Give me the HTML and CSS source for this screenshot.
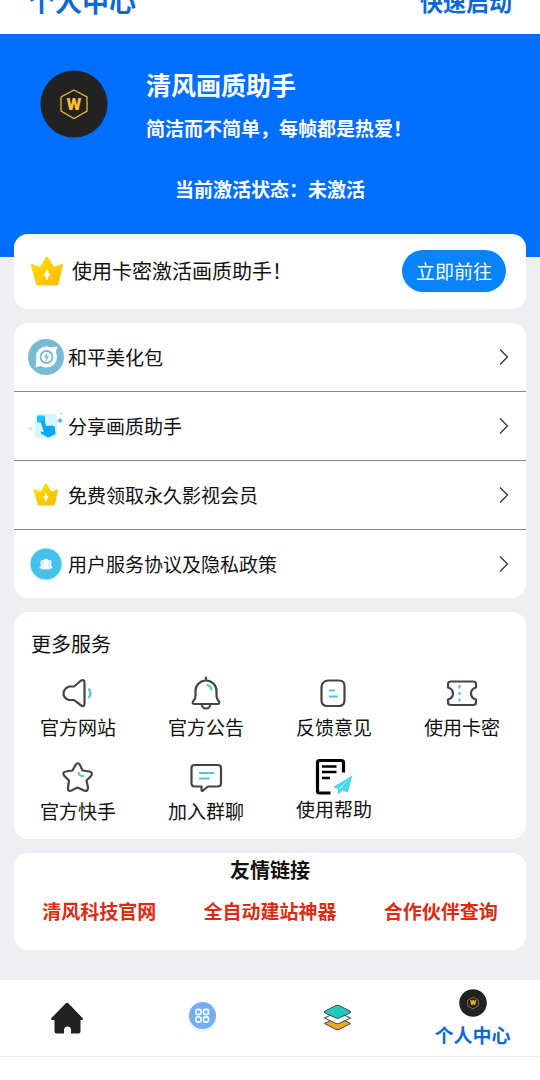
FILE: index.html
```html
<!DOCTYPE html>
<html lang="zh-CN">
<head>
<meta charset="utf-8">
<meta name="viewport" content="width=device-width, initial-scale=1">
<title>个人中心</title>
<link rel="stylesheet" href="styles.css">
</head>
<body>
<svg class="defs" aria-hidden="true">
  <defs>
    <linearGradient id="gold" x1="0" y1="0" x2="1" y2="1">
      <stop offset="0" stop-color="#ffe500"/>
      <stop offset="1" stop-color="#fbb60e"/>
    </linearGradient>
    <symbol id="crown" viewBox="0 0 34 30">
      <path d="M2 8 10 11 16 1Q17 0 18 1L24 11 32 8Q33 8 33 9L28.500 28Q28 29.500 26.500 29.500H8Q6.500 29.500 6 28L1 10Q1 7 2 8Z" fill="url(#gold)"/>
      <path d="M17 13.500Q18 17 20 18.500Q18 20 17 24Q16 20 14 18.500Q16 17 17 13.500Z" fill="#fff" stroke="#fff" stroke-width=".6"/>
    </symbol>
    <symbol id="logo" viewBox="0 0 68 68">
      <circle cx="34" cy="34" r="33.500" fill="#222"/>
      <path d="M34 20 47 27V41L34 48.500 21 41V27Z" fill="none" stroke="#e6b43c" stroke-width="1.300"/>
      <text x="34" y="40" text-anchor="middle" class="logo-letter">W</text>
    </symbol>
    <symbol id="chevron" viewBox="0 0 10 16">
      <path d="M1 .5 8.500 8 1 15.500" fill="none" stroke="#333" stroke-width="1.300"/>
    </symbol>
  </defs>
</svg>

<header class="topbar">
  <h1 class="topbar-title">个人中心</h1>
  <a class="topbar-link" href="#launch">快速启动</a>
</header>

<main class="page">
  <section class="hero">
    <div class="profile">
      <svg class="avatar"><use href="#logo"/></svg>
      <div class="profile-text">
        <h2 class="profile-name">清风画质助手</h2>
        <p class="profile-motto">简洁而不简单，每帧都是热爱！</p>
      </div>
    </div>
    <p class="status">当前激活状态：未激活</p>
  </section>

  <div class="cards">
    <section class="card activate">
      <svg class="activate-icon"><use href="#crown"/></svg>
      <p class="activate-text">使用卡密激活画质助手！</p>
      <button class="activate-button" type="button">立即前往</button>
    </section>

    <nav class="card menu">
      <a class="menu-row" href="#beauty">
        <svg class="menu-icon" viewBox="0 0 36 36">
          <circle cx="18" cy="18" r="18" fill="#79bad4"/>
          <circle cx="18.500" cy="18" r="10.500" fill="#fff"/>
          <path d="M23 8.500 29.500 7.500 27.500 14ZM8.500 20 7.500 28.500 14 26.500Z" fill="#fff"/>
          <circle cx="18.500" cy="18" r="6" fill="none" stroke="#79bad4" stroke-width="1.800"/>
          <path d="M19 14 16.500 18.500H18.500L18 22 20.500 17.500H18.800Z" fill="#79bad4" stroke="#79bad4" stroke-width=".6"/>
        </svg>
        <span class="menu-label">和平美化包</span>
        <svg class="chevron"><use href="#chevron"/></svg>
      </a>
      <a class="menu-row" href="#share">
        <svg class="menu-icon" viewBox="0 0 36 36">
          <rect x="7" y="6" width="22" height="24" rx="3" fill="#d5f5ff"/>
          <rect x="9" y="7.500" width="8" height="7" rx="1" fill="#1cc0fb"/>
          <path d="M12.500 13 16.500 12 18 18 25 17.500Q27 18 27 20L27.500 26 20 29.500 13 25.500 12.500 23 16 24.500Z" fill="#0ba5f5"/>
          <circle cx="2.500" cy="20.500" r="2" fill="#c2eff9"/>
          <circle cx="33.500" cy="5.500" r="1.500" fill="#c2eff9"/>
          <path d="M32 10 34.500 12.500 32 15 29.500 12.500Z" fill="#43b8c2"/>
        </svg>
        <span class="menu-label">分享画质助手</span>
        <svg class="chevron"><use href="#chevron"/></svg>
      </a>
      <a class="menu-row" href="#vip">
        <svg class="menu-icon" viewBox="0 0 36 36"><use href="#crown" x="5" y="6" width="26" height="23"/></svg>
        <span class="menu-label">免费领取永久影视会员</span>
        <svg class="chevron"><use href="#chevron"/></svg>
      </a>
      <a class="menu-row" href="#terms">
        <svg class="menu-icon" viewBox="0 0 36 36">
          <circle cx="18" cy="18" r="17" fill="#e2f6fd"/>
          <circle cx="18" cy="18" r="15.500" fill="#45c2ec"/>
          <g fill="#fff">
            <ellipse cx="14.500" cy="17" rx="2" ry="3"/><ellipse cx="21.500" cy="17" rx="2" ry="3"/>
            <path d="M11.500 22.500Q11.500 19.500 14 19H22Q24.500 19.500 24.500 22.500Z"/>
            <path d="M13.500 23.500Q14 20 16 19.500A3.200 4 0 1 1 20 19.500Q22 20 22.500 23.500Z" stroke="#45c2ec" stroke-width=".4"/>
          </g>
        </svg>
        <span class="menu-label">用户服务协议及隐私政策</span>
        <svg class="chevron"><use href="#chevron"/></svg>
      </a>
    </nav>

    <section class="card services">
      <h2 class="services-title">更多服务</h2>
      <div class="services-grid">
        <a class="service" href="#site">
          <svg class="service-icon" viewBox="0 0 40 40">
            <path class="ink" d="M11 13.500H16L22.500 8Q26.500 5.500 26.500 10V30Q26.500 35 22.500 32L16 27H11Q5.500 25 5.500 20.500T11 13.500Z"/>
            <path class="accent" d="M30.500 15.500Q34.500 20 30.500 25"/>
          </svg>
          <span>官方网站</span>
        </a>
        <a class="service" href="#notice">
          <svg class="service-icon" viewBox="0 0 40 40">
            <path class="ink" d="M20 4.500V7M9.500 18A10.500 10.500 0 0 1 30.500 18V23Q30.500 26 33 28.500 34 31 31.500 31H8.500Q6 31 7 28.500 9.500 26 9.500 23ZM15.500 31Q16 35.500 20 35.500T24.500 31"/>
            <path class="accent" d="M20.500 12Q25.500 12.500 25.500 17.500"/>
          </svg>
          <span>官方公告</span>
        </a>
        <a class="service" href="#feedback">
          <svg class="service-icon" viewBox="0 0 40 40">
            <path class="ink" d="M14 7.500H25Q30.500 7.500 30.500 13V27Q30.500 33 25 33H13Q7.500 33 7.500 27V14Q8 8 14 7.500Z"/>
            <path class="accent" d="M15 17.500H21M15 23.500H24"/>
          </svg>
          <span>反馈意见</span>
        </a>
        <a class="service" href="#card">
          <svg class="service-icon" viewBox="0 0 40 40">
            <path class="ink" d="M9 8.500H31Q34 8.500 34 11V14.500Q29 16 29 20.500T34 26.500V29.500Q34 32 31 32H9Q6 32 6 29.500V26.500Q11 25 11 20.500T6 14.500V11Q6 8.500 9 8.500Z"/>
            <path class="accent" d="M17.500 12V15.500M17.500 19V22M17.500 25.500V28.500"/>
          </svg>
          <span>使用卡密</span>
        </a>
        <a class="service" href="#kuaishou">
          <svg class="service-icon" viewBox="0 0 40 40">
            <path class="ink" d="M17.500 8Q20 4.500 22 8L24.500 13.500 31.500 14.500Q35.500 15.500 33 19L28.500 23.500 30 30.500Q30 35 26 33.500L19.500 30.500 13.500 33.500Q9.500 35 10 30.500L11 23.500 6 18.500Q4 15 8 14.500L14.500 13.500Z"/>
            <path class="accent" d="M20.500 15Q21 19.500 26 19"/>
          </svg>
          <span>官方快手</span>
        </a>
        <a class="service" href="#group">
          <svg class="service-icon" viewBox="0 0 40 40">
            <path class="ink" d="M8.500 8H32Q35 8 35 11V26.500Q35 29.500 32 29.500H22L17 33.500Q15.500 34.500 15.500 32.500V29.500H8.500Q5.500 29.500 5.500 26.500V11Q5.500 8 8.500 8Z"/>
            <path class="accent" d="M13 16H28M13 21.500H23.500"/>
          </svg>
          <span>加入群聊</span>
        </a>
        <a class="service service-tight" href="#help">
          <svg class="service-icon" viewBox="0 0 40 40">
            <path d="M16.500 36H5.500Q3.500 36 3.500 34V5.500Q3.500 3.500 5.500 3.500H27.500Q29.500 3.500 29.500 5.500V15.500" fill="none" stroke="#000" stroke-width="3.200"/>
            <path d="M8 9.500H22.500M8 15H22.500M8 21H16" stroke="#000" stroke-width="2.400"/>
            <path d="M37.500 19.500 20 30 24.500 31.500 37.500 19.500 26.500 32 33.500 35ZM24.500 31.500 24.500 37 28 33Z" fill="#48d9ee" stroke="#48d9ee"/>
          </svg>
          <span>使用帮助</span>
        </a>
      </div>
    </section>

    <section class="card links">
      <h2 class="links-title">友情链接</h2>
      <div class="links-row">
        <a href="#tech">清风科技官网</a>
        <a href="#builder">全自动建站神器</a>
        <a href="#partner">合作伙伴查询</a>
      </div>
    </section>
  </div>
</main>

<nav class="tabs">
  <a class="tab" href="#home" aria-label="首页">
    <svg class="tab-icon" viewBox="0 0 36 36">
      <path d="M15.500 3.500Q17 2 18.500 3.500L32.500 18Q34 20 31.500 20H30.500V31.500Q30.500 33.500 28.500 33.500H21V29.500Q20.500 26.500 17.500 26.500T14 29.500V33.500H6.500Q4.500 33.500 4.500 31.500V20H2.500Q0 20 1.500 18Z" fill="#222"/>
    </svg>
  </a>
  <a class="tab" href="#features" aria-label="功能">
    <svg class="tab-icon" viewBox="0 0 36 36">
      <circle cx="17.500" cy="18" r="14" fill="#e3f2ff"/>
      <circle cx="17.500" cy="15.500" r="13.500" fill="#75adf0"/>
      <g fill="none" stroke="#e2fbff" stroke-width="1.800">
        <rect x="11" y="9.500" width="5" height="5" rx="1.500"/><rect x="18.500" y="9.500" width="5" height="5" rx="1.500"/>
        <rect x="11" y="17" width="5" height="5" rx="1.500"/><rect x="18.500" y="17" width="5" height="5" rx="1.500"/>
      </g>
    </svg>
  </a>
  <a class="tab" href="#layers" aria-label="资源">
    <svg class="tab-icon" viewBox="0 0 36 36">
      <g stroke="#3a4a4a" stroke-linejoin="round">
        <path d="M17.500 17 30.500 23.500 19 29.500Q17.500 30 16 29.500L4.500 23.500Z" fill="#f3a623"/>
        <path d="M17.500 12 30.500 18 19 23.500Q17.500 24 16 23.500L4.500 18Z" fill="#fff"/>
        <path d="M16 5.500Q17.500 5 19 5.500L30 11Q31.500 12 30 13L19 18Q17.500 18.500 16 18L5 13Q3.500 12 5 11Z" fill="#20c9be"/>
      </g>
    </svg>
  </a>
  <a class="tab tab-current" href="#me" aria-current="page">
    <svg class="tab-avatar"><use href="#logo"/></svg>
    <span>个人中心</span>
  </a>
</nav>
</body>
</html>
```
FILE: styles.css
```css
* {
  box-sizing: border-box;
}

body {
  margin: 0;
  background: #fff;
  color: #111;
  font-family: "Noto Sans CJK SC", sans-serif;
  font-size: 19px;
  line-height: 24px;
}

h1, h2, p {
  margin: 0;
}

a {
  color: inherit;
  text-decoration: none;
}

svg {
  display: block;
  flex: none;
}

.defs {
  position: absolute;
  width: 0;
  height: 0;
}

.logo-letter {
  font: 900 17px Roboto, sans-serif;
  fill: #fbc02d;
}

/* The bar is partly scrolled out of view. */
.topbar {
  display: flex;
  align-items: center;
  justify-content: space-between;
  height: 66px;
  margin-top: -32px;
  padding: 0 28px;
  color: #0c69d8;
}

.topbar-title {
  font-size: 27px;
  font-weight: 700;
}

.topbar-link {
  font-size: 23px;
  font-weight: 700;
}

.page {
  padding-bottom: 30px;
  background: #efeff3;
}

.hero {
  padding: 36px 40px 56px;
  background: #006eff;
  color: #fff;
  font-weight: 700;
}

.profile {
  display: flex;
  gap: 38px;
}

.avatar {
  width: 68px;
  height: 68px;
}

.profile-name {
  font-size: 25px;
  line-height: 28px;
}

.profile-motto {
  margin-top: 18px;
}

.status {
  margin-top: 37px;
  text-align: center;
}

.cards {
  display: flex;
  flex-direction: column;
  gap: 14px;
  margin-top: -23px;
  padding: 0 14px;
}

.card {
  border-radius: 14px;
  background: #fff;
}

.activate {
  display: flex;
  align-items: center;
  gap: 8px;
  padding: 16px 20px 17px 16px;
  font-size: 20px;
}

.activate-icon {
  width: 34px;
  height: 30px;
}

.activate-text {
  flex: 1;
}

.activate-button {
  padding: 9px 14px;
  border: 0;
  border-radius: 21px;
  background: #0783fb;
  color: #fff;
  font: inherit;
  font-size: 19px;
}

.menu-row {
  display: flex;
  align-items: center;
  gap: 4px;
  height: 69px;
  padding: 0 17px 0 14px;
}

.menu-row:first-child {
  height: 68px;
}

.menu-row + .menu-row {
  border-top: 1px solid #888;
}

.menu-icon {
  width: 36px;
  height: 36px;
}

.menu-label {
  flex: 1;
}

.chevron {
  width: 10px;
  height: 16px;
}

.services {
  padding: 20px 0 16px;
}

.services-title {
  padding: 0 17px;
  font-size: 20px;
  font-weight: 400;
}

.services-grid {
  display: grid;
  grid-template-columns: repeat(4, 1fr);
  row-gap: 18px;
  margin-top: 17px;
}

.service {
  display: flex;
  flex-direction: column;
  align-items: center;
  gap: 2px;
}

.service-tight {
  gap: 0;
}

.service-icon {
  width: 40px;
  height: 40px;
}

.ink {
  fill: none;
  stroke: #444;
  stroke-width: 2.2;
  stroke-linecap: round;
  stroke-linejoin: round;
}

.accent {
  fill: none;
  stroke: #53c5de;
  stroke-width: 2.2;
}

.links {
  padding: 5px 0 27px;
  text-align: center;
  font-weight: 700;
}

.links-title {
  font-size: 20px;
}

.links-row {
  display: grid;
  grid-template-columns: repeat(3, 1fr);
  margin-top: 17px;
  color: #dc2a14;
}

.tabs {
  display: grid;
  grid-template-columns: repeat(4, 1fr);
  height: 77px;
  border-bottom: 1px solid #eee;
}

.tab {
  display: flex;
  flex-direction: column;
  align-items: center;
  justify-content: center;
}

.tab-current {
  gap: 6px;
  color: #0c69d8;
  font-weight: 700;
}

.tab-icon {
  width: 36px;
  height: 36px;
}

.tab-avatar {
  width: 28px;
  height: 28px;
}
```
